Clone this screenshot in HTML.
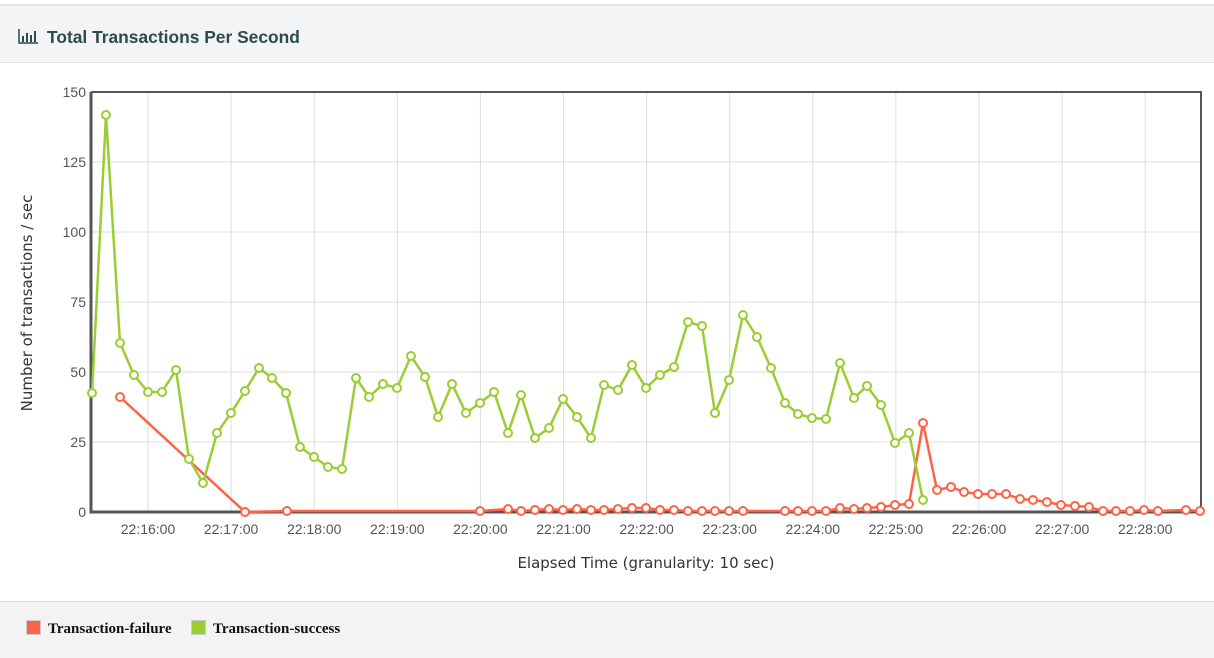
<!DOCTYPE html>
<html><head><meta charset="utf-8"><style>
body{margin:0;width:1214px;height:657px;overflow:hidden;background:#fff;font-family:"Liberation Sans",sans-serif}
.top{position:absolute;left:0;top:0;width:1214px;height:4px;background:#fff;border-bottom:2px solid #e3e5e8}
.hdr{position:absolute;left:0;top:6px;width:1214px;height:56px;background:#f3f4f5;border-bottom:1px solid #e2e2e2}
.hdr span{position:absolute;left:47px;top:21px;font-size:17.4px;font-weight:bold;color:#2d4a4f}
.foot{position:absolute;left:0;top:601px;width:1214px;height:56px;background:#f3f3f3;border-top:1px solid #ddd}
.lg{position:absolute;top:19px;font-family:"Liberation Serif",serif;font-weight:bold;font-size:15px;color:#111}
.sw{position:absolute;top:18px;width:13px;height:13px;border:1px solid #ccc}
svg{position:absolute;left:0;top:0}
</style></head><body>
<div class="top"></div>
<div class="hdr">
<svg width="30" height="30" style="left:18px;top:22px" viewBox="0 0 30 30"><path d="M1 1V15H20" stroke="#2d4a4f" stroke-width="1.5" fill="none"/><rect x="4" y="8" width="2" height="6" fill="#2d4a4f"/><rect x="8" y="5" width="2" height="9" fill="#2d4a4f"/><rect x="12" y="7" width="2" height="7" fill="#2d4a4f"/><rect x="16" y="3" width="2" height="11" fill="#2d4a4f"/></svg>
<span>Total Transactions Per Second</span></div>
<svg id="c" width="1214" height="600"></svg>
<div class="foot">
<div class="sw" style="left:26px;background:#ff6347"></div><div class="lg" style="left:48px">Transaction-failure</div>
<div class="sw" style="left:191px;background:#9acd32"></div><div class="lg" style="left:213px">Transaction-success</div>
</div>
<script>
var s='';
var ns=document.getElementById('c');
for(var i=0;i<=6;i++){var y=512-i*70;s+='<line x1="91" x2="1201" y1="'+y+'" y2="'+y+'" stroke="#ddd"/>';
s+='<text x="86" y="'+(y+5)+'" text-anchor="end" font-size="14" fill="#555" font-family="Liberation Sans">'+(i*25)+'</text>';}
var tl=['22:16:00','22:17:00','22:18:00','22:19:00','22:20:00','22:21:00','22:22:00','22:23:00','22:24:00','22:25:00','22:26:00','22:27:00','22:28:00'];
for(var i=0;i<13;i++){var x=148+i*83.1;s+='<line x1="'+x+'" x2="'+x+'" y1="92" y2="512" stroke="#ddd"/>';
s+='<text x="'+x+'" y="534" text-anchor="middle" font-size="14" fill="#555" font-family="Liberation Sans">'+tl[i]+'</text>';}
s+='<path d="M91 92H1201V512" stroke="#555" stroke-width="2" fill="none"/><path d="M91 92V512H1201" stroke="#555" stroke-width="3" fill="none"/>';
s+='<text x="646" y="568" text-anchor="middle" font-size="15" fill="#333" font-family="DejaVu Sans">Elapsed Time (granularity: 10 sec)</text>';
s+='<text transform="translate(32,303) rotate(-90)" text-anchor="middle" font-size="15" fill="#333" font-family="DejaVu Sans">Number of transactions / sec</text>';
var g=[[92,393],[106,115],[120,343],[134,375],[148,392],[162,392],[176,370],[189,459],[203,483],[217,433],[231,413],[245,391],[259,368],[272,378],[286,393],[300,447],[314,457],[328,467],[342,469],[356,378],[369,397],[383,384],[397,388],[411,356],[425,377],[438,417],[452,384],[466,413],[480,403],[494,392],[508,433],[521,395],[535,438],[549,428],[563,399],[577,417],[591,438],[604,385],[618,390],[632,365],[646,388],[660,375],[674,367],[688,322],[702,326],[715,413],[729,380],[743,315],[757,337],[771,368],[785,403],[798,414],[812,418],[826,419],[840,363],[854,398],[867,386],[881,405],[895,443],[909,433],[923,500]];
var r=[[120,397],[245,512],[287,511],[480,511],[508,509],[521,511],[535,510],[549,509],[563,510],[577,509],[591,510],[604,510],[618,509],[632,508],[646,508],[660,510],[674,510],[688,511],[702,511],[715,511],[729,511],[743,511],[785,511],[798,511],[812,511],[826,511],[840,508],[854,509],[867,508],[881,507],[895,505],[909,504],[923,423],[937,490],[951,487],[964,492],[978,494],[992,494],[1006,494],[1020,499],[1033,500],[1047,502],[1061,505],[1075,506],[1089,507],[1103,511],[1116,511],[1130,511],[1144,510],[1158,511],[1186,510],[1200,511]];
function ser(a,c){var p=a.map(function(q){return q.join(',')}).join(' ');
var o='<polyline points="'+p+'" fill="none" stroke="'+c+'" stroke-width="2.5"/>';
a.forEach(function(q){o+='<circle cx="'+q[0]+'" cy="'+q[1]+'" r="4" fill="#fff" stroke="'+c+'" stroke-width="2"/>'});return o;}
s+=ser(r,'#ff6347')+ser(g,'#9acd32');
ns.innerHTML=s;
</script>
</body></html>
